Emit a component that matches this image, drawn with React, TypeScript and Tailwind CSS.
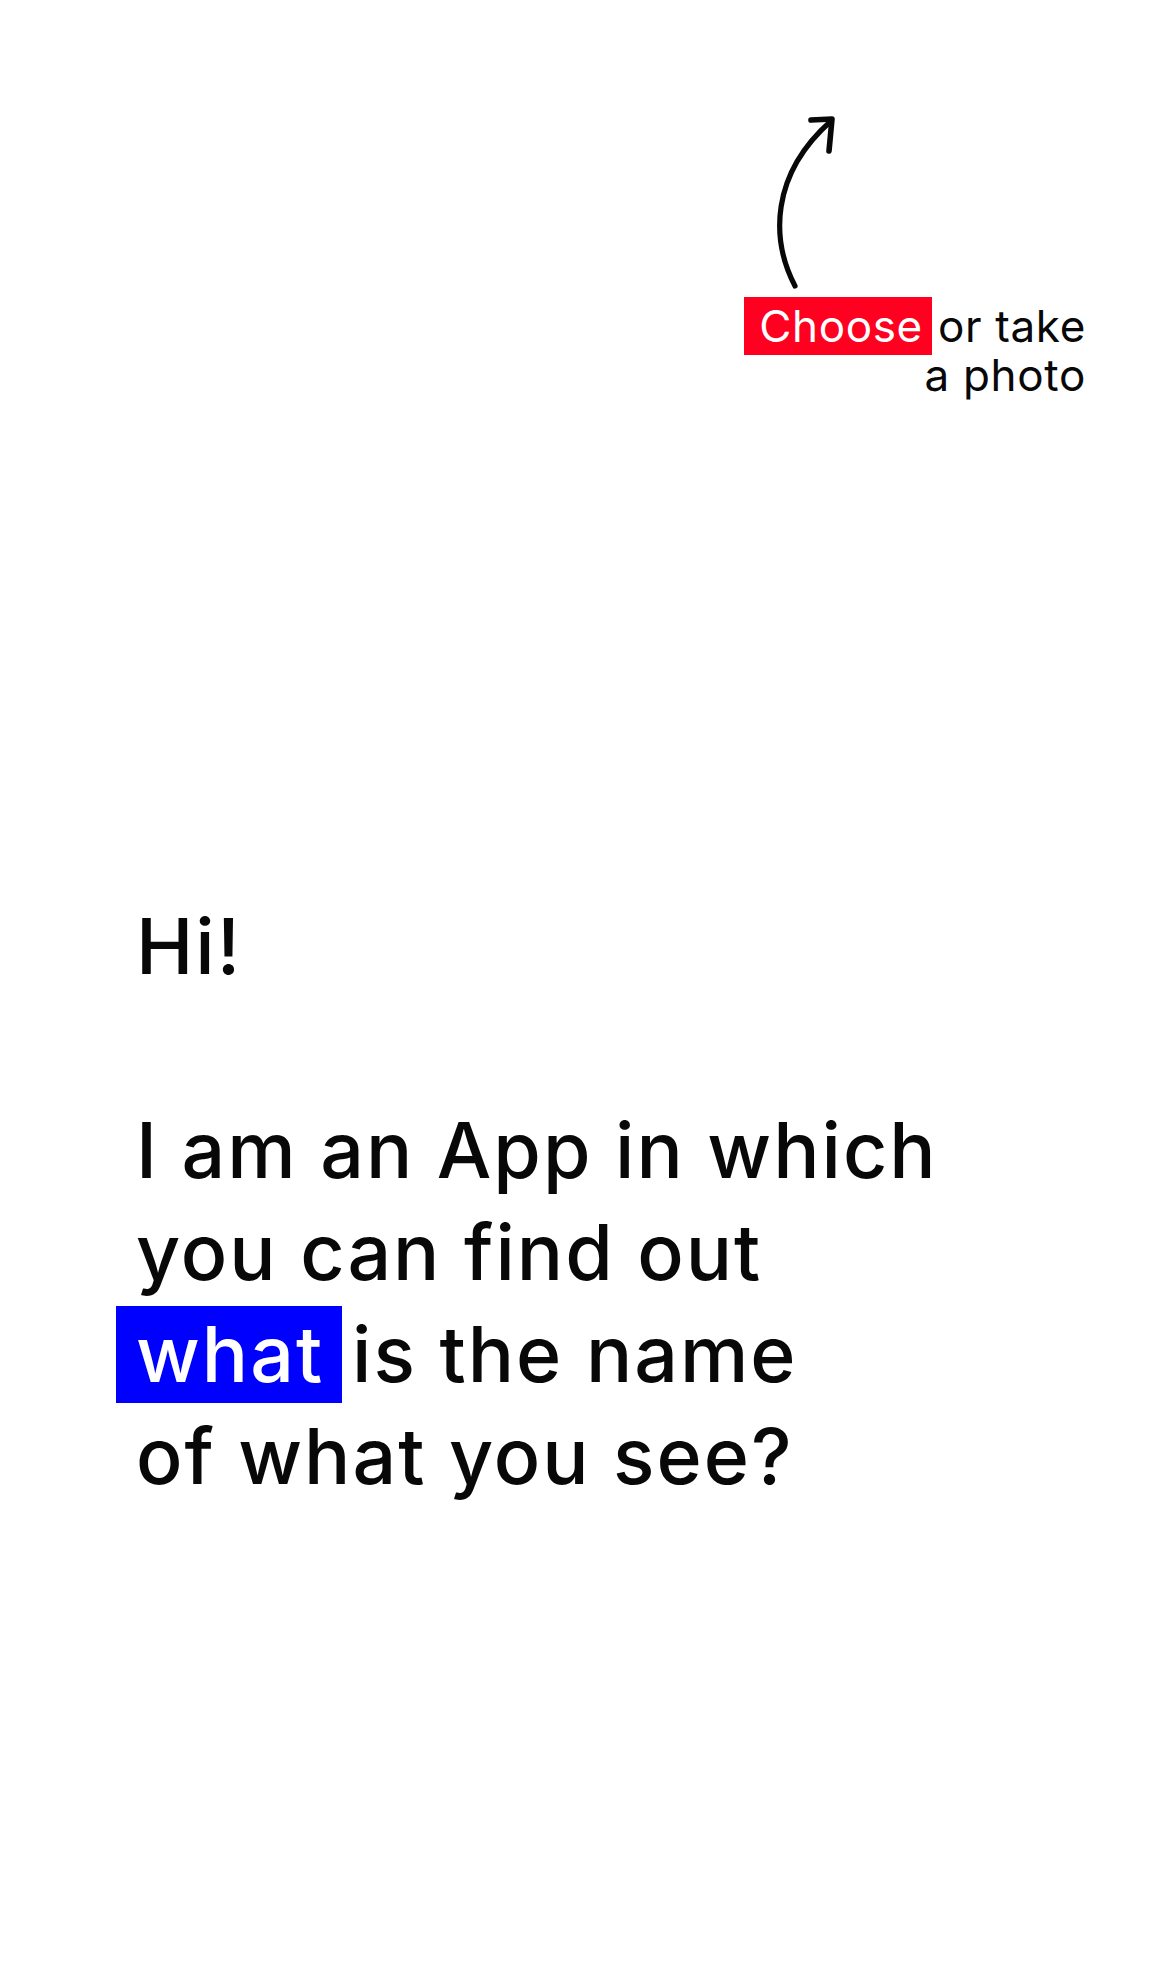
import React from 'react';

function CurvedArrow() {
	return (
		<svg
			width="72"
			height="176"
			viewBox="766 114 72 176"
			fill="none"
			stroke="#080808"
			strokeLinecap="round"
			strokeLinejoin="round"
			className="block"
		>
			<path d="M795 286 C 771 240, 770 175, 831 121" strokeWidth="5.2" />
			<path d="M811 120 L832 119 L829 151" strokeWidth="5.6" />
		</svg>
	);
}

export default function App() {
	return (
		<div className="min-h-screen bg-white font-['Inter','Liberation_Sans',sans-serif] text-[#080808]">
			{/* arrow + photo hint */}
			<div className="flex flex-col">
				<div className="ml-[766px] mt-[114px]">
					<CurvedArrow />
				</div>
				<p className="mt-[12px] pr-[84px] text-right text-[44px] leading-[48.5px] font-normal tracking-[0.015em]">
					<span className="bg-[#ff0020] pr-[9px] pl-[15px] py-[2px] text-white">Choose</span>
					<span className="ml-[6px]">or take</span>
					<br />
					a photo
				</p>
			</div>

			{/* intro */}
			<div className="mt-[496px] pl-[136px] text-[77px] leading-[102px] font-medium tracking-[0.026em]">
				<p>Hi!</p>
				<p className="mt-[102px]">
					I am an App in which
					<br />
					you can find out
					<br />
					<span className="-ml-[20px] inline-block bg-[#0000ff] pl-[20px] pr-[18px] leading-[97px] text-white">
						what
					</span>
					<span className="ml-[10px]">is the name</span>
					<br />
					of what you see?
				</p>
			</div>
		</div>
	);
}
